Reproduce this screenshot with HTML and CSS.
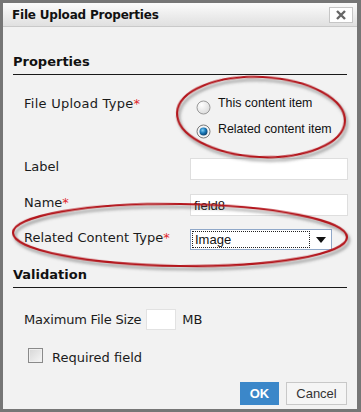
FILE: index.html
```html
<!DOCTYPE html>
<html>
<head>
<meta charset="utf-8">
<link rel="stylesheet" href="styles.css">
</head>
<body>
<div class="dialog">
  <div class="titlebar">
    <span class="title">File Upload Properties</span>
    <span class="close">
      <svg width="12" height="10" viewBox="0 0 12 10"><path d="M2 1 L10 9 M10 1 L2 9" stroke="#666" stroke-width="2.4"/></svg>
    </span>
  </div>
  <div class="content">
    <div class="heading">Properties</div>
    <div class="form">
      <div class="label lbl-type">File Upload Type<span class="req">*</span></div>
      <div class="radios">
        <div class="option">
          <svg class="radio" width="15" height="15" viewBox="0 0 15 15">
            <defs>
              <radialGradient id="ru" cx="0.35" cy="0.3" r="0.8">
                <stop offset="0" stop-color="#ffffff"/>
                <stop offset="1" stop-color="#d8d8d8"/>
              </radialGradient>
            </defs>
            <circle cx="7.5" cy="7.5" r="6.5" fill="url(#ru)" stroke="#9a9a9a" stroke-width="1"/>
          </svg>
          <span class="opt-text">This content item</span>
        </div>
        <div class="option">
          <svg class="radio" width="15" height="15" viewBox="0 0 15 15">
            <defs>
              <radialGradient id="rc" cx="0.4" cy="0.35" r="0.7">
                <stop offset="0" stop-color="#7fd0f5"/>
                <stop offset="0.5" stop-color="#1a78b8"/>
                <stop offset="1" stop-color="#0b3c66"/>
              </radialGradient>
            </defs>
            <circle cx="7.5" cy="7.5" r="6.5" fill="#f4f4f4" stroke="#7a7a7a" stroke-width="1"/>
            <circle cx="7.5" cy="7.5" r="4" fill="url(#rc)"/>
          </svg>
          <span class="opt-text">Related content item</span>
        </div>
      </div>

      <div class="label row-label">Label</div>
      <div class="input wide row-label"></div>

      <div class="label row-name">Name<span class="req">*</span></div>
      <div class="input wide row-name"><span class="val">field8</span></div>

      <div class="label row-rel">Related Content Type<span class="req">*</span></div>
      <div class="select row-rel">
        <span class="sel-text">Image</span>
        <span class="arrow"><svg width="10" height="6" viewBox="0 0 10 6"><path d="M0 0 H10 L5 6 Z" fill="#111"/></svg></span>
      </div>
    </div>

    <div class="heading heading-val">Validation</div>
    <div class="sizerow">
      <span class="label">Maximum File Size</span>
      <span class="input small"></span>
      <span class="label">MB</span>
    </div>
    <div class="checkrow">
      <span class="checkbox"></span>
      <span class="label">Required field</span>
    </div>
    <div class="buttons">
      <button class="btn ok">OK</button>
      <button class="btn cancel">Cancel</button>
    </div>
  </div>

  <svg class="marks" width="361" height="412" viewBox="0 0 361 412">
    <defs>
      <filter id="sh" x="-20%" y="-30%" width="140%" height="160%">
        <feDropShadow dx="2" dy="3" stdDeviation="1.8" flood-color="#444" flood-opacity="0.55"/>
      </filter>
    </defs>
    <ellipse cx="261" cy="117" rx="84" ry="40" transform="rotate(3 261 117)" fill="none" stroke="#b3131b" stroke-width="2.2" filter="url(#sh)"/>
    <ellipse cx="180" cy="235" rx="167" ry="31" transform="rotate(0.8 180 235)" fill="none" stroke="#b3131b" stroke-width="2.2" filter="url(#sh)"/>
  </svg>
</div>
</body>
</html>
```

FILE: styles.css
```css
html, body {
  margin: 0;
  padding: 0;
}
body {
  width: 361px;
  height: 412px;
  overflow: hidden;
  background: #777;
}
.dialog {
  position: relative;
  box-sizing: border-box;
  width: 361px;
  height: 412px;
  border: 3px solid #767676;
  border-right-width: 4px;
  background: #f2f2f2;
  font-family: "DejaVu Sans", Verdana, sans-serif;
  font-size: 13px;
  color: #1b1b1b;
}
.titlebar {
  height: 24px;
  box-sizing: border-box;
  border-bottom: 1px solid #c9c9c9;
  background: linear-gradient(#fbfbfb, #e0e0e0);
  display: flex;
  align-items: center;
  justify-content: space-between;
  padding: 0 4px 0 9px;
}
.title {
  font-weight: bold;
  font-size: 12px;
  color: #111;
  letter-spacing: -0.2px;
}
.close {
  width: 22px;
  height: 14px;
  background: #fff;
  border: 1px solid #c6c6c6;
  display: flex;
  align-items: center;
  justify-content: center;
}
.content {
  padding: 27px 10px 0 10px;
}
.heading {
  font-weight: bold;
  font-size: 13px;
  line-height: 16px;
  padding-bottom: 4px;
  border-bottom: 1px solid #1a1a1a;
  color: #111;
}
.heading-val {
  margin-top: 17px;
}
.form {
  margin-top: 20px;
  padding-left: 11px;
  display: grid;
  grid-template-columns: 166px 158px;
  row-gap: 0;
}
.label {
  line-height: 18px;
  white-space: nowrap;
}
.req {
  color: #e0262b;
}
.lbl-type {
  line-height: 16px;
  padding-top: 1px;
  letter-spacing: 0.25px;
}
.radios {
  display: flex;
  flex-direction: column;
  height: 48px;
}
.option {
  display: flex;
  align-items: flex-start;
  height: 24px;
  font-family: "Liberation Sans", Arial, sans-serif;
  font-size: 12.4px;
  color: #111;
}
.radio {
  margin: 5px 0 0 6px;
  flex: none;
}
.opt-text {
  margin-left: 7px;
  line-height: 16px;
}
.option + .option .radio {
  margin-top: 5px;
}
.option + .option .opt-text {
  padding-top: 2px;
}
.input {
  box-sizing: border-box;
  background: #fff;
  border: 1px solid #dedede;
}
.wide {
  width: 158px;
  height: 22px;
  display: flex;
  align-items: center;
  padding-left: 3px;
  font-family: "Liberation Sans", Arial, sans-serif;
  font-size: 13px;
  color: #111;
}
.row-label {
  margin-top: 15px;
}
.row-name {
  margin-top: 14px;
}
.row-rel {
  margin-top: 13px;
}
.select {
  box-sizing: border-box;
  width: 142px;
  height: 21px;
  background: #fff;
  border: 1px solid #8fa7c8;
  display: flex;
  align-items: stretch;
  font-family: "Liberation Sans", Arial, sans-serif;
  font-size: 13px;
  color: #111;
}
.sel-text {
  flex: 1;
  margin: 1px;
  border: 1px dotted #222;
  padding-left: 2px;
  display: flex;
  align-items: center;
}
.arrow {
  width: 20px;
  display: flex;
  align-items: center;
  justify-content: center;
}
.sizerow {
  margin-top: 21px;
  padding-left: 11px;
  display: flex;
  align-items: center;
  height: 21px;
}
.sizerow .label:first-child {
  letter-spacing: -0.2px;
}
.small {
  width: 30px;
  height: 21px;
  margin: 0 6px 0 5px;
  border-color: #e2e2e2;
}
.checkrow {
  margin-top: 18px;
  padding-left: 15px;
  display: flex;
  align-items: flex-start;
}
.checkbox {
  box-sizing: border-box;
  width: 15px;
  height: 15px;
  border: 1px solid #8a8a8a;
  background: linear-gradient(135deg, #d6d6d6, #f6f6f6);
  box-shadow: inset 0 0 0 1px #f0f0f0;
}
.checkrow .label {
  margin-left: 9px;
  padding-top: 1px;
}
.buttons {
  margin-top: 15px;
  display: flex;
  justify-content: flex-end;
  gap: 7px;
}
.btn {
  font-family: "Liberation Sans", Arial, sans-serif;
  font-size: 13px;
  height: 23px;
  padding: 0;
  box-sizing: border-box;
}
.ok {
  width: 39px;
  background: #3b87c9;
  color: #fff;
  border: 1px solid #3b87c9;
  font-weight: bold;
}
.cancel {
  width: 61px;
  background: #f5f5f5;
  color: #333;
  border: 1px solid #c8c8c8;
}
.marks {
  position: absolute;
  left: -3px;
  top: -3px;
  pointer-events: none;
}
```
